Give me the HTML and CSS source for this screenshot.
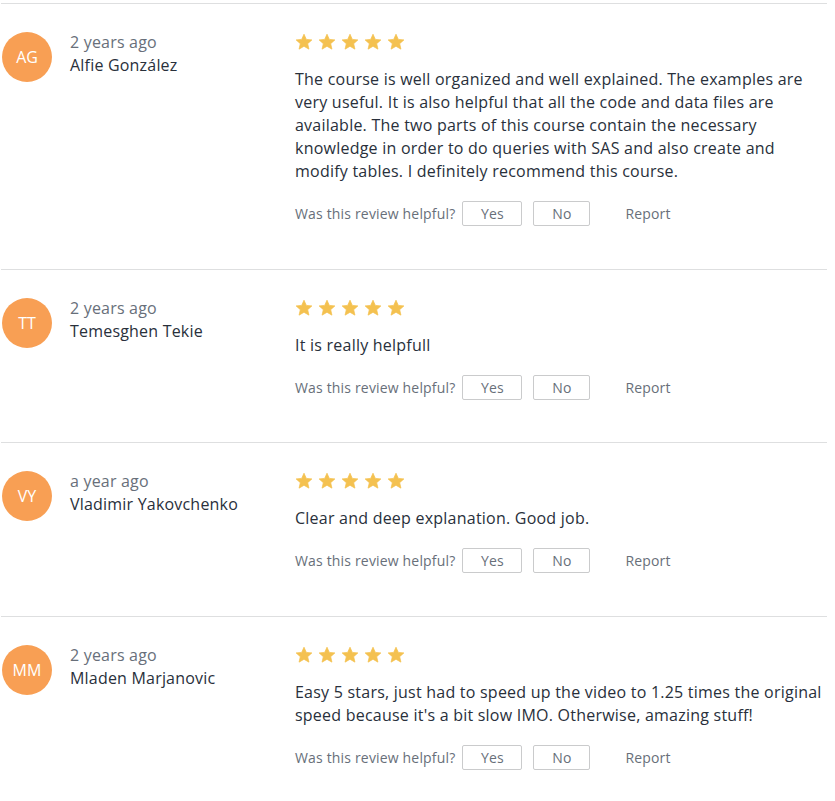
FILE: index.html
```html
<!DOCTYPE html>
<html>
<head>
    <title>Reviews</title>
    <link rel="stylesheet" href="styles.css">
</head>
<body>
    <svg width="0" height="0" class="defs">
        <defs>
            <symbol id="star" viewBox="0 0 24 24">
                <path d="M12 1.6l3.1 6.9 7.4.7-5.6 5 1.7 7.3L12 17.7l-6.6 3.8 1.7-7.3-5.6-5 7.4-.7z" stroke-linejoin="round"/>
            </symbol>
        </defs>
    </svg>

    <div class="reviews">
        <div class="review">
            <div class="author">
                <div class="avatar">AG</div>
                <div class="meta">
                    <div class="date">2 years ago</div>
                    <div class="name">Alfie González</div>
                </div>
            </div>
            <div class="content">
                <div class="stars">
                    <svg><use href="#star"/></svg><svg><use href="#star"/></svg><svg><use href="#star"/></svg><svg><use href="#star"/></svg><svg><use href="#star"/></svg>
                </div>
                <p class="text">The course is well organized and well explained. The examples are very useful. It is also helpful that all the code and data files are available. The two parts of this course contain the necessary knowledge in order to do queries with SAS and also create and modify tables. I definitely recommend this course.</p>
                <div class="helpful">
                    <span>Was this review helpful?</span>
                    <button class="vote yes">Yes</button>
                    <button class="vote no">No</button>
                    <a class="report">Report</a>
                </div>
            </div>
        </div>

        <div class="review">
            <div class="author">
                <div class="avatar">TT</div>
                <div class="meta">
                    <div class="date">2 years ago</div>
                    <div class="name">Temesghen Tekie</div>
                </div>
            </div>
            <div class="content">
                <div class="stars">
                    <svg><use href="#star"/></svg><svg><use href="#star"/></svg><svg><use href="#star"/></svg><svg><use href="#star"/></svg><svg><use href="#star"/></svg>
                </div>
                <p class="text">It is really helpfull</p>
                <div class="helpful">
                    <span>Was this review helpful?</span>
                    <button class="vote yes">Yes</button>
                    <button class="vote no">No</button>
                    <a class="report">Report</a>
                </div>
            </div>
        </div>

        <div class="review">
            <div class="author">
                <div class="avatar">VY</div>
                <div class="meta">
                    <div class="date">a year ago</div>
                    <div class="name">Vladimir Yakovchenko</div>
                </div>
            </div>
            <div class="content">
                <div class="stars">
                    <svg><use href="#star"/></svg><svg><use href="#star"/></svg><svg><use href="#star"/></svg><svg><use href="#star"/></svg><svg><use href="#star"/></svg>
                </div>
                <p class="text">Clear and deep explanation. Good job.</p>
                <div class="helpful">
                    <span>Was this review helpful?</span>
                    <button class="vote yes">Yes</button>
                    <button class="vote no">No</button>
                    <a class="report">Report</a>
                </div>
            </div>
        </div>

        <div class="review">
            <div class="author">
                <div class="avatar">MM</div>
                <div class="meta">
                    <div class="date">2 years ago</div>
                    <div class="name">Mladen Marjanovic</div>
                </div>
            </div>
            <div class="content">
                <div class="stars">
                    <svg><use href="#star"/></svg><svg><use href="#star"/></svg><svg><use href="#star"/></svg><svg><use href="#star"/></svg><svg><use href="#star"/></svg>
                </div>
                <p class="text">Easy 5 stars, just had to speed up the video to 1.25 times the original speed because it's a bit slow IMO. Otherwise, amazing stuff!</p>
                <div class="helpful">
                    <span>Was this review helpful?</span>
                    <button class="vote yes">Yes</button>
                    <button class="vote no">No</button>
                    <a class="report">Report</a>
                </div>
            </div>
        </div>
    </div>
</body>
</html>
```

FILE: styles.css
```css
body {
    margin: 0;
    padding-top: 3px;
    font-family: 'Open Sans', 'Noto Sans', sans-serif;
    color: #29303b;
    background-color: #fff;
}
.defs {
    position: absolute;
}
.reviews {
    width: 826px;
    margin-left: 1px;
}
.review {
    display: flex;
    border-top: 1px solid #dedfe0;
    padding: 29px 0 42.5px 1px;
}
.author {
    width: 293px;
    flex-shrink: 0;
    display: flex;
    gap: 18px;
    margin-top: -1px;
}
.avatar {
    width: 50px;
    height: 50px;
    border-radius: 50%;
    background-color: #f89f54;
    color: #fff;
    font-size: 16px;
    line-height: 50px;
    text-align: center;
}
.meta {
    font-size: 16px;
    line-height: 23px;
    margin-top: -1px;
    letter-spacing: 0.2px;
}
.date {
    color: #686f7a;
}
.name {
    color: #29303b;
}
.content {
    flex: 1;
}
.stars {
    display: flex;
    gap: 5px;
    height: 18px;
}
.stars svg {
    width: 18px;
    height: 18px;
    fill: #f4c150;
    stroke: #f4c150;
    stroke-width: 1;
}
.text {
    margin: 17px 0 0;
    font-size: 16px;
    line-height: 23px;
    letter-spacing: 0.23px;
    color: #29303b;
}
.helpful {
    display: flex;
    align-items: center;
    margin-top: 18px;
    font-size: 14px;
    letter-spacing: 0.17px;
    color: #686f7a;
}
.vote {
    height: 25px;
    padding: 0;
    margin-left: 7px;
    border: 1px solid #cacbcc;
    border-radius: 2px;
    background-color: #fff;
    color: #686f7a;
    font-family: 'Open Sans', 'Noto Sans', sans-serif;
    font-size: 14px;
    letter-spacing: 0.17px;
    line-height: 23px;
    cursor: pointer;
}
.yes {
    width: 60px;
}
.no {
    width: 57px;
    margin-left: 11px;
}
.report {
    margin-left: 35px;
    color: #686f7a;
    cursor: pointer;
}
```
